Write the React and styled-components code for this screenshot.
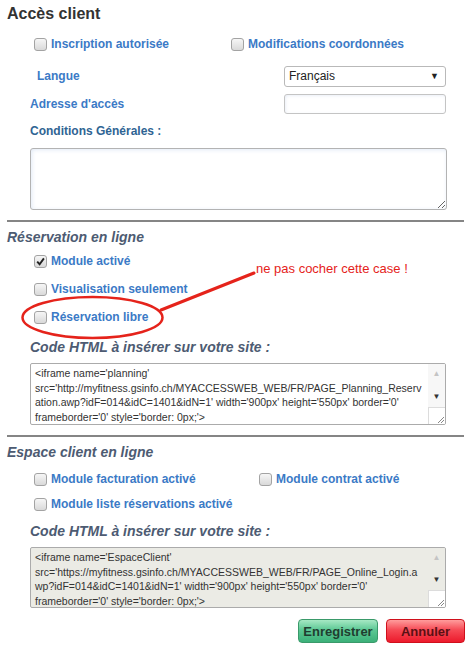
import React from 'react'
import styled, { createGlobalStyle } from 'styled-components';

const GlobalStyle = createGlobalStyle`
  body {
    margin: 0;
    background: #fff;
    font-family: "Liberation Sans", Arial, sans-serif;
  }
`;

const Page = styled.div`
  position: relative;
  width: 470px;
  height: 649px;
  padding: 0 6px 0 7px;
  box-sizing: border-box;
  overflow: hidden;
`;

const Title = styled.h1`
  margin: 0;
  height: 28px;
  line-height: 28px;
  font-size: 16px;
  font-weight: bold;
  color: #333;
`;

const SectionTitle = styled.h2`
  margin: 5px 0 0;
  height: 20px;
  line-height: 20px;
  font-size: 14px;
  font-weight: bold;
  font-style: italic;
  color: #4d5b72;
`;

const Rule = styled.hr`
  margin: ${p => p.$top}px 0 0;
  border: 0;
  height: 2px;
  background: #858585;
`;

const CheckGrid = styled.div`
  display: grid;
  grid-template-columns: ${p => p.$cols || '1fr'};
  row-gap: ${p => p.$gap || 0}px;
  margin-top: ${p => p.$top || 0}px;
  padding-left: 27px;
`;

const CheckRow = styled.label`
  display: flex;
  align-items: center;
  gap: 4px;
  height: 24px;
  font-size: 12px;
  font-weight: bold;
  color: #3b7ac6;
`;

const Box = styled.span`
  width: 11px;
  height: 11px;
  border: 1px solid #a3a3a3;
  border-radius: 3px;
  background: linear-gradient(#f6f6f6, #d9d9d9);
  display: flex;
  align-items: center;
  justify-content: center;
  flex-shrink: 0;
`;

const FormRow = styled.div`
  display: grid;
  grid-template-columns: 254px 162px;
  align-items: center;
  height: 24px;
  margin-top: ${p => p.$top}px;
  padding-left: 23px;
`;

const Label = styled.span`
  font-size: 12px;
  font-weight: bold;
  color: ${p => p.$dark ? '#2f6493' : '#3b7ac6'};
  padding-left: ${p => p.$indent || 0}px;
`;

const FakeSelect = styled.div`
  height: 21px;
  box-sizing: border-box;
  border: 1px solid #b9b9b9;
  border-radius: 3px;
  background: #fff;
  display: flex;
  align-items: center;
  justify-content: space-between;
  padding: 0 6px 0 4px;
  font-size: 12px;
  color: #222;
`;

const Arrow = styled.span`
  font-size: 9px;
  color: #222;
`;

const TextInput = styled.input`
  height: 20px;
  width: 162px;
  box-sizing: border-box;
  border: 1px solid #c4c4c4;
  border-radius: 3px;
  box-shadow: inset 1px 1px 3px rgba(120, 150, 200, 0.15);
  outline: none;
`;

const FieldLabel = styled.div`
  margin-top: 4px;
  height: 20px;
  line-height: 20px;
  padding-left: 23px;
`;

const Area = styled.textarea`
  display: block;
  margin: 8px 0 0 23px;
  width: 417px;
  height: 62px;
  box-sizing: border-box;
  border: 1px solid #b3b3b3;
  border-radius: 3px;
  box-shadow: inset 1px 1px 4px rgba(110, 150, 210, 0.2);
  outline: none;
  resize: both;
`;

const CodeLabel = styled.div`
  margin-top: ${p => p.$top}px;
  height: 20px;
  line-height: 20px;
  padding-left: 23px;
  font-size: 14px;
  font-weight: bold;
  font-style: italic;
  color: #4d5b72;
`;

const CodeBox = styled.div`
  display: flex;
  margin: 6px 0 0 23px;
  width: 416px;
  height: ${p => p.$h}px;
  box-sizing: border-box;
  border: 1px solid #ababab;
  border-radius: 2px;
  background: ${p => p.$disabled ? '#ebebe5' : '#fff'};
  overflow: hidden;
`;

const CodeText = styled.div`
  flex: 1;
  padding: 2px 4px;
  font-size: 10.5px;
  line-height: 14.5px;
  color: #333;
  white-space: pre;
  overflow: hidden;
`;

const ScrollCol = styled.div`
  width: 17px;
  display: flex;
  flex-direction: column;
  background: ${p => p.$disabled ? '#ebebe5' : '#f7f7f7'};
`;

const ScrollTrack = styled.div`
  flex: 1;
  display: flex;
  flex-direction: column;
  justify-content: space-between;
  align-items: center;
  padding: 5px 0 6px;
  font-size: 8px;
`;

const Grip = styled.div`
  height: 16px;
  border-top: 1px solid #dcdcdc;
  border-left: 1px solid #dcdcdc;
  background: #fff;
  display: flex;
  align-items: flex-end;
  justify-content: flex-end;
`;

const Buttons = styled.div`
  display: flex;
  justify-content: flex-end;
  gap: 8px;
  margin: 11px -1px 0 0;
`;

const Button = styled.button`
  height: 24px;
  width: ${p => p.$w}px;
  border-radius: 4px;
  font-family: inherit;
  font-size: 13px;
  font-weight: bold;
  padding: 0;
  border: 1px solid ${p => p.$red ? '#d0101c' : '#3a9a6a'};
  color: ${p => p.$red ? '#5a1014' : '#1f3d30'};
  background: ${p => p.$red
    ? 'linear-gradient(#ff9c9c 0%, #f64a55 45%, #ec1a2c 100%)'
    : 'linear-gradient(#a6e8c4 0%, #5cc894 45%, #3cb079 100%)'};
`;

const Note = styled.span`
  position: absolute;
  left: 256px;
  top: 261px;
  font-size: 13px;
  color: #e5231b;
`;

const Annotation = styled.svg`
  position: absolute;
  left: 0;
  top: 0;
  pointer-events: none;
`;

const Check = ({ checked }) => (
  <Box>
    {checked && (
      <svg width="9" height="9" viewBox="0 0 9 9">
        <path d="M1.2 4.6 L3.6 7.2 L7.9 1.4" fill="none" stroke="#222" strokeWidth="1.9" />
      </svg>
    )}
  </Box>
);

const Option = ({ label, checked }) => (
  <CheckRow>
    <Check checked={checked} />
    {label}
  </CheckRow>
);

const Code = ({ lines, h, disabled }) => (
  <CodeBox $h={h} $disabled={disabled}>
    <CodeText>{lines.join('\n')}</CodeText>
    <ScrollCol $disabled={disabled}>
      <ScrollTrack>
        <span style={{ color: '#c4c4c4' }}>▲</span>
        <span style={{ color: '#333' }}>▼</span>
      </ScrollTrack>
      <Grip>
        <svg width="10" height="10" viewBox="0 0 10 10">
          <path d="M9 3 L3 9 M9 6 L6 9" stroke="#888" strokeWidth="1" />
        </svg>
      </Grip>
    </ScrollCol>
  </CodeBox>
);

const planning = [
  "<iframe name='planning'",
  "src='http://myfitness.gsinfo.ch/MYACCESSWEB_WEB/FR/PAGE_Planning_Reserv",
  "ation.awp?idF=014&idC=1401&idN=1' width='900px' height='550px' border='0'",
  "frameborder='0' style='border: 0px;'>",
  "<p>Votre navigateur ne supporte pas les iframes.</p></iframe>",
];

const espace = [
  "<iframe name='EspaceClient'",
  "src='https://myfitness.gsinfo.ch/MYACCESSWEB_WEB/FR/PAGE_Online_Login.a",
  "wp?idF=014&idC=1401&idN=1' width='900px' height='550px' border='0'",
  "frameborder='0' style='border: 0px;'>",
  "<p>Votre navigateur ne supporte pas les iframes.</p></iframe>",
];

const App = () => {
  return (
    <>
      <GlobalStyle />
      <Page>
        <Title>Accès client</Title>
        <CheckGrid $cols="197px 1fr" $top={4}>
          <Option label="Inscription autorisée" />
          <Option label="Modifications coordonnées" />
        </CheckGrid>

        <FormRow $top={8}>
          <Label $indent={7}>Langue</Label>
          <FakeSelect>
            Français
            <Arrow>▼</Arrow>
          </FakeSelect>
        </FormRow>
        <FormRow $top={4}>
          <Label>Adresse d'accès</Label>
          <TextInput />
        </FormRow>
        <FieldLabel>
          <Label $dark>Conditions Générales :</Label>
        </FieldLabel>
        <Area />

        <Rule $top={10} />
        <SectionTitle>Réservation en ligne</SectionTitle>
        <CheckGrid $gap={4} $top={2}>
          <Option label="Module activé" checked />
          <Option label="Visualisation seulement" />
          <Option label="Réservation libre" />
        </CheckGrid>
        <CodeLabel $top={8}>Code HTML à insérer sur votre site :</CodeLabel>
        <Code lines={planning} h={62} />

        <Rule $top={10} />
        <SectionTitle>Espace client en ligne</SectionTitle>
        <CheckGrid $cols="225px 1fr" $gap={1} $top={5}>
          <Option label="Module facturation activé" />
          <Option label="Module contrat activé" />
          <Option label="Module liste réservations activé" />
        </CheckGrid>
        <CodeLabel $top={5}>Code HTML à insérer sur votre site :</CodeLabel>
        <Code lines={espace} h={61} disabled />

        <Buttons>
          <Button $w={80}>Enregistrer</Button>
          <Button $w={79} $red>Annuler</Button>
        </Buttons>

        <Note>ne pas cocher cette case !</Note>
        <Annotation width="470" height="649">
          <ellipse cx="92.5" cy="317.5" rx="70" ry="20.5" fill="none" stroke="#e5231b" strokeWidth="2.5" />
          <path d="M161 310 L254 273" stroke="#e5231b" strokeWidth="3" strokeLinecap="round" />
        </Annotation>
      </Page>
    </>
  )
}

export default App
